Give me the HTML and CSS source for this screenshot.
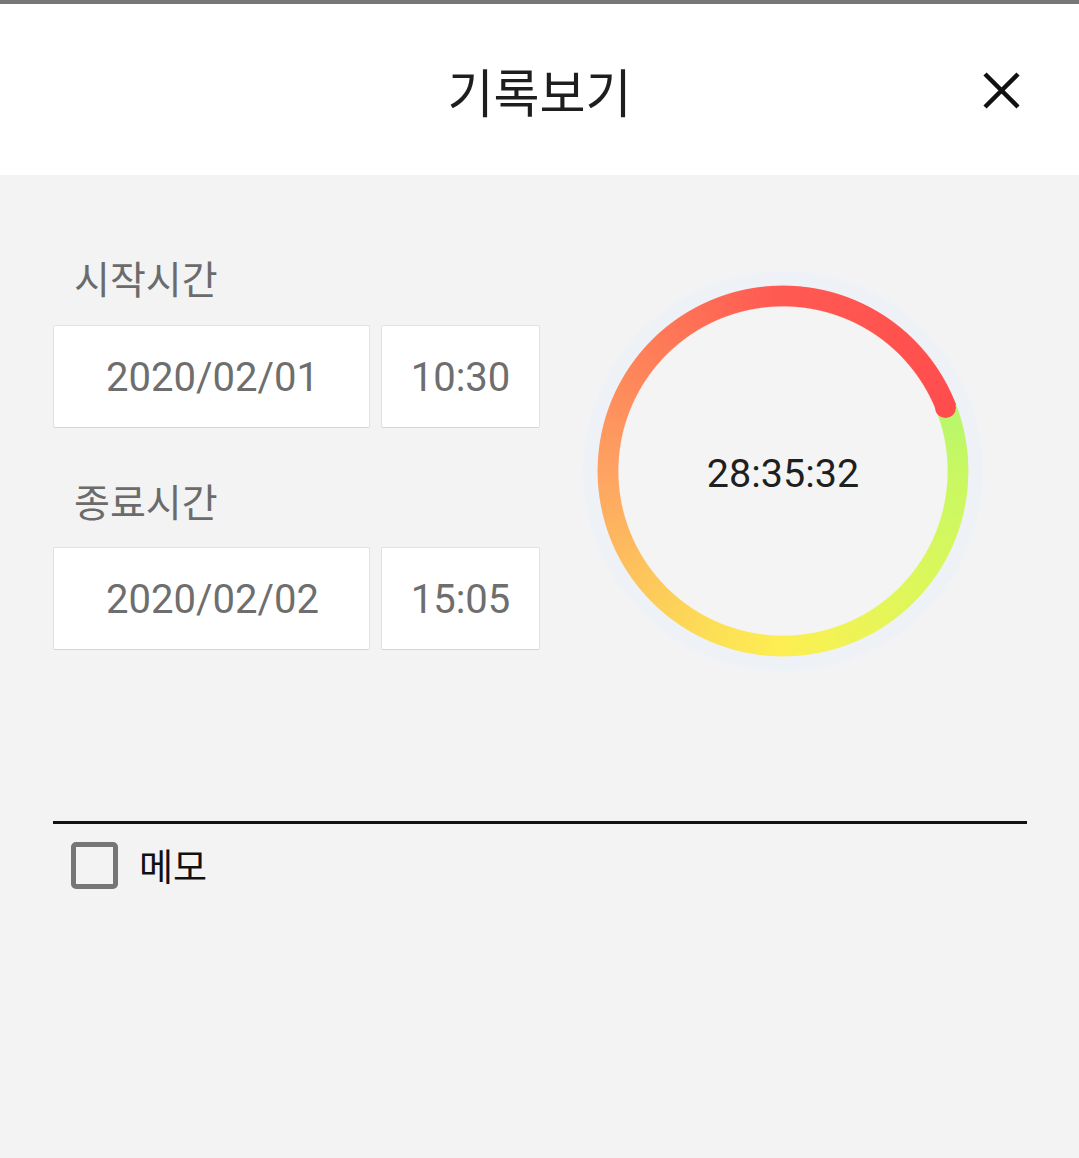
FILE: index.html
```html
<!DOCTYPE html>
<html lang="ko">
<head>
<meta charset="utf-8">
<link rel="stylesheet" href="styles.css">
</head>
<body>
<div class="page">
  <header class="header">
    <h1 class="title">기록보기</h1>
    <button class="close" aria-label="닫기">
      <svg width="37" height="37" viewBox="0 0 37 37"><path d="M2 2 L35 35 M35 2 L2 35" stroke="#111" stroke-width="4.5" stroke-linecap="butt" fill="none"/></svg>
    </button>
  </header>
  <main class="main">
    <section class="row">
      <div class="fields">
        <div class="label">시작시간</div>
        <div class="inputs">
          <div class="box date">2020/02/01</div>
          <div class="box time">10:30</div>
        </div>
        <div class="label second">종료시간</div>
        <div class="inputs">
          <div class="box date">2020/02/02</div>
          <div class="box time">15:05</div>
        </div>
      </div>
      <div class="timer">
        <div class="halo"></div>
        <div class="ring"></div>
        <div class="cap"></div>
        <div class="elapsed">28:35:32</div>
      </div>
    </section>
    <hr class="divider">
    <label class="memo">
      <span class="check"></span>
      <span class="memo-text">메모</span>
    </label>
  </main>
</div>
</body>
</html>
```
FILE: styles.css
```css
* { box-sizing: border-box; }
html, body { margin: 0; padding: 0; }
body {
  width: 1079px;
  height: 1158px;
  background: #f3f3f3;
  font-family: "Noto Sans CJK KR", "Noto Sans", Roboto, sans-serif;
  overflow: hidden;
}
.page {
  border-top: 4px solid #777777;
}
.header {
  position: relative;
  height: 171px;
  background: #ffffff;
  display: flex;
  align-items: center;
  justify-content: center;
}
.title {
  margin: 0;
  font-size: 50px;
  font-weight: 400;
  color: #1e1e1e;
  line-height: 1;
  transform: scaleY(1.04);
}
.close {
  position: absolute;
  left: 983px;
  top: 68px;
  width: 37px;
  height: 37px;
  padding: 0;
  border: 0;
  background: transparent;
  display: block;
}
.close svg { display: block; }
.main {
  padding: 77px 52px 0 53px;
}
.row {
  display: flex;
  align-items: flex-start;
  height: 420px;
}
.fields {
  width: 487px;
  display: flex;
  flex-direction: column;
}
.label {
  height: 50px;
  line-height: 50px;
  padding-left: 21px;
  font-size: 39px;
  color: #6b6b6b;
}
.label.second { margin-top: 47px; }
.inputs {
  display: flex;
  gap: 11px;
  margin-top: 23px;
}
.label.second + .inputs { margin-top: 22px; }
.box {
  height: 103px;
  background: #ffffff;
  border: 1.5px solid #e2e2e2;
  border-bottom-color: #d6d6d6;
  border-radius: 2px;
  display: flex;
  align-items: center;
  justify-content: center;
  font-family: Roboto, "Noto Sans", sans-serif;
  font-size: 40px;
  color: #6e6e6e;
  padding-top: 2px;
}
.date { width: 317px; padding-left: 2px; }
.time { width: 159px; }
.timer {
  position: relative;
  width: 402px;
  height: 402px;
  margin-top: 18px;
  margin-left: 42px;
}
.halo {
  position: absolute;
  inset: 0;
  border-radius: 50%;
  background: radial-gradient(circle closest-side, #f4f4f4 0, #f4f4f4 88%, #eef1f6 89%, #eef1f6 98.5%, #f1f3f5 100%);
}
.ring {
  position: absolute;
  left: 15px;
  top: 15px;
  width: 372px;
  height: 372px;
  border-radius: 50%;
  background: conic-gradient(from 69deg,
    #b7f66c 0%,
    #c8f862 6%,
    #def75a 18%,
    #f4f254 27%,
    #fdee52 31%,
    #fddd56 38%,
    #fdc75b 45%,
    #fea262 56%,
    #fe7c58 68%,
    #ff5a52 80%,
    #ff4d4d 100%);
  -webkit-mask: radial-gradient(circle closest-side, transparent 0, transparent 88.2%, #000 88.8%, #000 99.4%, transparent 100%);
  mask: radial-gradient(circle closest-side, transparent 0, transparent 88.2%, #000 88.8%, #000 99.4%, transparent 100%);
}
.cap {
  position: absolute;
  width: 21px;
  height: 21px;
  border-radius: 50%;
  background: #ff4d4d;
  left: 353px;
  top: 127px;
}
.elapsed {
  position: absolute;
  inset: 0;
  display: flex;
  align-items: center;
  justify-content: center;
  font-family: Roboto, "Noto Sans", sans-serif;
  font-size: 39.5px;
  color: #1f1f1f;
  padding-top: 5px;
}
.divider {
  margin: 149px 0 0 0;
  border: 0;
  height: 3px;
  background: #111111;
}
.memo {
  display: flex;
  align-items: center;
  gap: 21px;
  margin-top: 18px;
  margin-left: 18px;
}
.check {
  width: 47px;
  height: 47px;
  border: 5px solid #767676;
  border-radius: 5px;
  background: transparent;
}
.memo-text {
  font-size: 37px;
  color: #111111;
  line-height: 47px;
}
```
